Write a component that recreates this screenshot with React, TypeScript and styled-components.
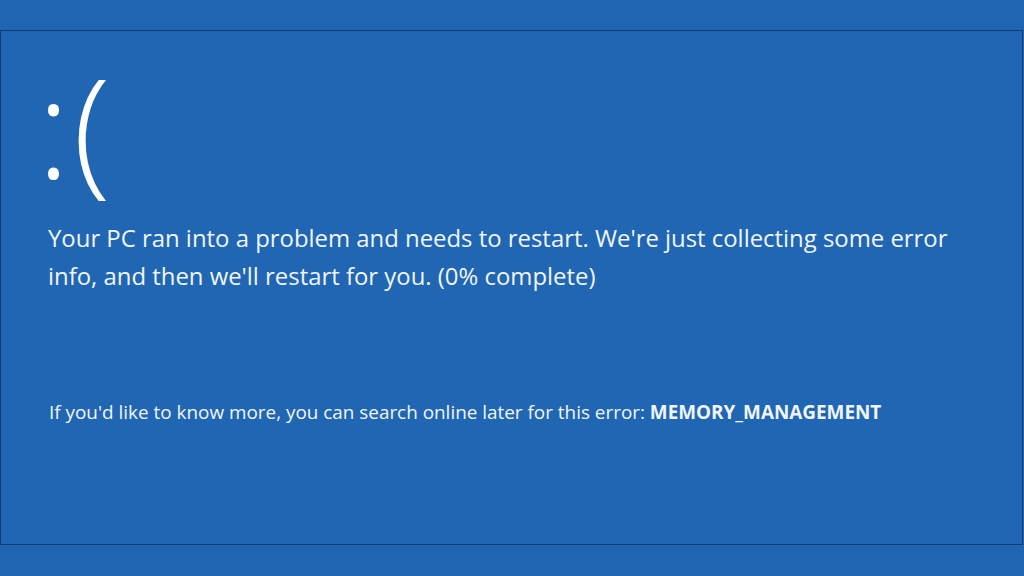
import React from "react";
import styled, { createGlobalStyle } from "styled-components";

const Global = createGlobalStyle`
  html, body { margin: 0; padding: 0; background: #1f65b1; }
  body { width: 1024px; height: 576px; overflow: hidden; font-family: "Open Sans", "Noto Sans", sans-serif; }
`;

const Page = styled.div`
  width: 1024px;
  height: 576px;
  box-sizing: border-box;
  padding: 30px 1px 31px 0px;
  background: #1f65b1;
`;

const Panel = styled.main`
  box-sizing: border-box;
  height: 100%;
  border: 1.5px solid #173a6e;
  background: #2066b2;
  color: #ffffff;
  padding: 24px 0 0 47px;
  display: flex;
  flex-direction: column;
`;

const Face = styled.div`
  font-family: "Open Sans", sans-serif;
  font-weight: 300;
  font-size: 138px;
  line-height: 140px;
  height: 150px;
  margin-left: -11px;
  letter-spacing: 3px;
`;

const Message = styled.p`
  margin: 14px 0 0 0;
  font-weight: 400;
  font-size: 23.9px;
  line-height: 38px;
  color: #f1f5fa;
  max-width: 930px;
`;

const Info = styled.p`
  margin: 104px 0 0 1px;
  font-size: 18.9px;
  font-weight: 400;
  color: #f1f5fa;
`;

const Code = styled.strong`
  font-weight: 700;
`;

export default function App() {
  return (
    <>
      <Global />
      <Page>
        <Panel>
          <Face>:(</Face>
          <Message>
            Your PC ran into a problem and needs to restart. We're just collecting some error info, and then we'll restart for you. (0% complete)
          </Message>
          <Info>
            If you'd like to know more, you can search online later for this error: <Code>MEMORY_MANAGEMENT</Code>
          </Info>
        </Panel>
      </Page>
    </>
  );
}
